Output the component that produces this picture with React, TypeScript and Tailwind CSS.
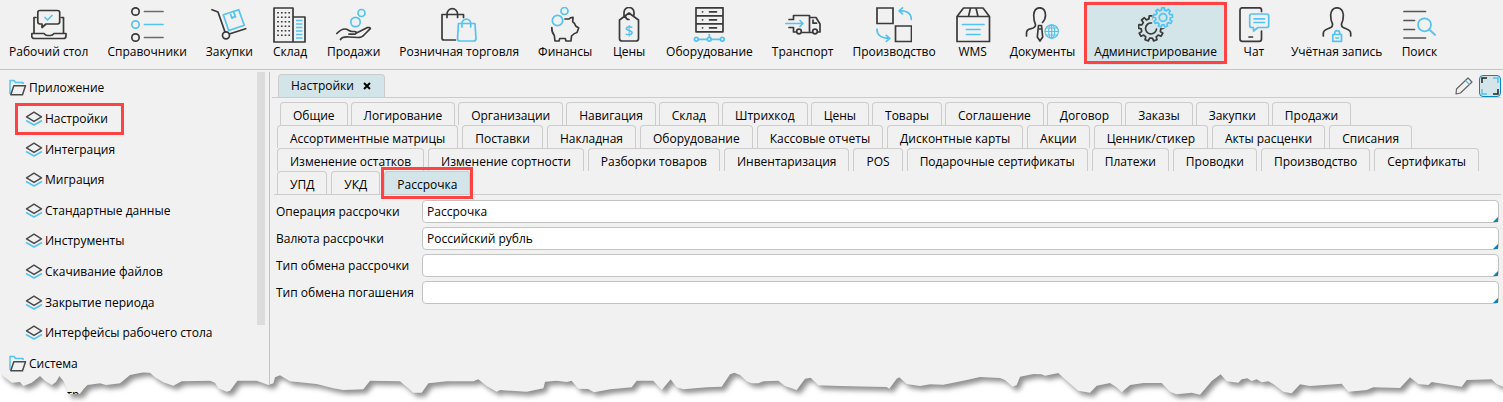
import type { ReactNode } from "react";
import clsx from "clsx";

const DARK = "#3a3a3a";
const BLUE = "#54c3f1";

function gearPath(cx: number, cy: number, outer: number, inner: number, teeth: number) {
  const points: string[] = [];
  const step = (Math.PI * 2) / teeth;
  for (let i = 0; i < teeth; i++) {
    const a = i * step - Math.PI / 2;
    const corners = [
      [-0.3, inner],
      [-0.2, outer],
      [0.2, outer],
      [0.3, inner],
    ];
    for (const [offset, radius] of corners) {
      const t = a + offset * step;
      points.push(`${(cx + radius * Math.cos(t)).toFixed(2)} ${(cy + radius * Math.sin(t)).toFixed(2)}`);
    }
  }
  return `M${points.join("L")}Z`;
}

function Icon({ children }: { children: ReactNode }) {
  return (
    <svg
      viewBox="0 0 36 36"
      className="size-9"
      fill="none"
      stroke={DARK}
      strokeWidth="1.7"
      strokeLinecap="round"
      strokeLinejoin="round"
      aria-hidden="true"
    >
      {children}
    </svg>
  );
}

const icons: Record<string, ReactNode> = {
  desktop: (
    <>
      <path d="M5 10.500H3V26M30.500 10.500h2V26M11 20.500v-3.500H9q-2.200 0-2.200-2.200V5.500Q6.800 3.500 9 3.500h17.500q2.200 0 2.200 2v9.300q0 2.200-2.200 2.200H15z" />
      <path d="M.8 26.500H13q1.500 2 3.500 2h3q2 0 3.500-2h12v2.500q0 2.500-2.500 2.500H3.500Q.8 31.500.8 29z" />
      <path stroke={BLUE} d="m14 10.500 2.500 2.500L21 8.500" />
    </>
  ),
  list: (
    <>
      <circle cx="6.500" cy="4.500" r="3.700" />
      <circle cx="6.500" cy="17.500" r="3.700" stroke={BLUE} />
      <circle cx="6.500" cy="30.500" r="3.700" />
      <path stroke="#6b6b6b" d="M15.500 4.500h18.500M15.500 30.500h18.500" />
      <path stroke={BLUE} d="M15.500 17.500h18.500" />
    </>
  ),
  trolley: (
    <>
      <path d="M1 2.700 7 5l7 20M19 26.700l15.700-5" />
      <circle cx="15" cy="28.300" r="3.500" />
      <path stroke={BLUE} d="m12.300 7.700 15.400-5 5.600 15.600-15.600 5.200zM19 5.700l2 5.500 2-1.500 1.500.3-2-5.500" />
    </>
  ),
  warehouse: (
    <>
      <path d="M2 1h19v34H2zM21 10h12v25H21" />
      <path strokeDasharray="1.500 3" strokeLinecap="butt" d="M6 5v27M9.800 5v27M13.500 5v27M17.200 5v27" />
      <path stroke={BLUE} strokeLinecap="butt" d="M24 13.500h6.500M24 17h6.500M24 20.500h6.500M24 24h6.500M24 27.500h6.500M24 31h6.500" />
    </>
  ),
  sales: (
    <>
      <circle cx="25.500" cy="6" r="3.500" stroke={BLUE} />
      <circle cx="19.500" cy="15" r="4.700" stroke={BLUE} />
      <path d="M.8 26.500Q5 22 9 22c3 0 4 2.500 7 2.500h2.500q2 0 1.500 1.500t-2 1.200H13M20.500 26 31 20.700q3.500-.7 3.300 1L28 28q-2 2.500-6 2.500l-9-.5Q6 29.500 4.500 32.500" />
    </>
  ),
  retail: (
    <>
      <path d="M22.500 10.500v-3H1V31q0 2 2 2h11.500M6 10.500V7a5.300 5.300 0 0 1 10.600 0v3.500" />
      <path stroke={BLUE} d="M17.500 16.500h16.500l1 15q0 2.500-2.500 2.500H19q-2.500 0-2.500-2.500zM21 20v-3.500a4.300 4.300 0 0 1 8.700 0V20" />
    </>
  ),
  finance: (
    <>
      <circle cx="17.500" cy="4" r="3.500" stroke={BLUE} />
      <circle cx="10.500" cy="13.500" r="5.200" stroke={BLUE} />
      <path d="M18 12h4q1.500-1.800 4-1.700l-.3 4.400q2.300 1.500 3 4.300l3 2-1.700 4.500q-2.700.5-5.500 3.500L24 34h-5l-.7-2.500h-5.500L12 34H8l-.7-5.500Q4.500 25 4.800 20.500" />
    </>
  ),
  tag: (
    <>
      <path d="m18 6-9.500 7v18.500Q8.500 34 11 34h14q2.500 0 2.500-2.500V13zM13 9V5.500a5 5 0 0 1 10 0V8M14.500 9.500q.5 3 3.500 3" />
      <text x="18" y="28.500" textAnchor="middle" fill={BLUE} stroke="none" className="font-['Open_Sans'] text-[15px] font-semibold">
        $
      </text>
    </>
  ),
  server: (
    <>
      <path d="M5 .8h27v8H5zM5 8.800h27v8H5zM5 16.800h27v8H5zM11.500 4.800h.1M18.500 4.800h7M11.500 12.800h.1M18.500 12.800h7M11.500 20.800h.1M18.500 20.800h7" />
      <path stroke={BLUE} d="M18.300 27.500v3M7 32.300h9.300M20.300 32.300h9" />
      <circle cx="5.300" cy="32.300" r="1.900" stroke={BLUE} />
      <circle cx="18.300" cy="32.300" r="1.900" stroke={BLUE} />
      <circle cx="31.300" cy="32.300" r="1.900" stroke={BLUE} />
    </>
  ),
  truck: (
    <>
      <path d="M4 12.500h4.500V8.500h16v17M24.500 10.500H31l4 6.500v8h-2M4 20.500h4.500V25H11M17 25.500h10M31.500 16.200h-3.500v-3" />
      <circle cx="14" cy="24.500" r="2.300" />
      <circle cx="30" cy="24.500" r="2.300" />
      <path stroke={BLUE} d="M.8 16.500H18M15 13.500l3 3-3 3" />
    </>
  ),
  production: (
    <>
      <path strokeLinejoin="miter" d="M1 1h16v15.500H1zM19.500 19h16v15.500h-16z" />
      <path stroke={BLUE} d="M35.300 12.500q.5-8.500-12-8.800M26.500.8l-3.500 3 3.500 3M1 22q-.3 9 12.700 9.300M10.300 28.300l3.500 3-3.500 3" />
    </>
  ),
  box: (
    <>
      <path d="M2 9.500h32.500v25H2zL8.500 1h19.500l6.500 8.500M15.500 1l-2 8.500M21 1l2 8.500" />
      <path stroke={BLUE} d="M7.500 17.500h21.500M11.500 22.500h13.500M11.500 27.500h13.500" />
    </>
  ),
  documents: (
    <>
      <path d="M2.500 29v-3q0-3.500 4.500-4.300 4.500-1 4.500-4Q9.700 14 9.700 8 10.300.8 15.700.8T21.500 8q0 4.500-3 7.500M14.500 18.500h3l1.200 11.500-2.700 4-2.700-4zM15 22h2" />
      <g stroke={BLUE} strokeWidth="1.200">
        <circle cx="27.700" cy="24.500" r="6.700" />
        <ellipse cx="27.700" cy="24.500" rx="3" ry="6.700" />
        <path d="M27.700 18v13M21 24.500h13.500M22 21h11.500M22 28h11.500" />
      </g>
    </>
  ),
  gears: (
    <>
      <path d={gearPath(13, 21.5, 12.7, 9.8, 9)} />
      <path d="M18.500 22a5.500 5.500 0 1 1-5-6" />
      <circle cx="25" cy="10.500" r="10.700" fill="#d3e5e8" stroke="none" />
      <path stroke={BLUE} d={gearPath(25, 10.5, 9.7, 7.5, 9)} />
      <circle cx="25" cy="10.500" r="3.800" stroke={BLUE} />
    </>
  ),
  chat: (
    <>
      <path d="M25.500 4.500V3q0-2.200-2.200-2.200H6.200Q4 .8 4 3v29q0 2.300 2.200 2.300h17.100q2.200 0 2.200-2.300v-8M13 30h3.500" />
      <path stroke={BLUE} d="M15.700 7h15q2 0 2 2v9.500q0 2-2 2H22l-4.500 3.500v-3.500h-1.800q-2 0-2-2V9q0-2 2-2zM18 11.800h10.500M18 15.500h10.500" />
    </>
  ),
  account: (
    <>
      <path d="M4.300 29v-2.500q0-3 4-4.500l3.500-1.500q2-1 1.700-3.500Q11.500 13.500 11.700 7.500 12.500.8 18 .8t6.300 6.700q.2 6-1.800 9.500-.3 2.500 1.700 3.500l3.500 1.500q4 1.500 4 4.500V29" />
      <path stroke={BLUE} d="M13.800 27.500h8.700v6.800h-8.700zM15.700 27.500v-1.300a2.500 2.500 0 0 1 5 0v1.300M17 31h2.500" />
    </>
  ),
  search: (
    <>
      <path stroke="#555" d="M3 4.500h21.500M3 13.500h10.500M3 22.500h10.500M3 31h21.500" />
      <circle cx="23.500" cy="17.800" r="6.500" stroke={BLUE} />
      <path stroke={BLUE} d="m28.200 22.500 6 5.500" />
    </>
  ),
};

const toolbar = [
  { label: "Рабочий стол", icon: "desktop" },
  { label: "Справочники", icon: "list" },
  { label: "Закупки", icon: "trolley" },
  { label: "Склад", icon: "warehouse" },
  { label: "Продажи", icon: "sales" },
  { label: "Розничная торговля", icon: "retail" },
  { label: "Финансы", icon: "finance" },
  { label: "Цены", icon: "tag" },
  { label: "Оборудование", icon: "server" },
  { label: "Транспорт", icon: "truck" },
  { label: "Производство", icon: "production" },
  { label: "WMS", icon: "box" },
  { label: "Документы", icon: "documents" },
  { label: "Администрирование", icon: "gears", active: true },
  { label: "Чат", icon: "chat" },
  { label: "Учётная запись", icon: "account" },
  { label: "Поиск", icon: "search" },
];

const tree = [
  { label: "Приложение", folder: true },
  { label: "Настройки", marked: true },
  { label: "Интеграция" },
  { label: "Миграция" },
  { label: "Стандартные данные" },
  { label: "Инструменты" },
  { label: "Скачивание файлов" },
  { label: "Закрытие периода" },
  { label: "Интерфейсы рабочего стола" },
  { label: "Система", folder: true },
  { label: "Настройки" },
];

const tabRows = [
  ["Общие", "Логирование", "Организации", "Навигация", "Склад", "Штрихкод", "Цены", "Товары", "Соглашение", "Договор", "Заказы", "Закупки", "Продажи"],
  ["Ассортиментные матрицы", "Поставки", "Накладная", "Оборудование", "Кассовые отчеты", "Дисконтные карты", "Акции", "Ценник/стикер", "Акты расценки", "Списания"],
  ["Изменение остатков", "Изменение сортности", "Разборки товаров", "Инвентаризация", "POS", "Подарочные сертификаты", "Платежи", "Проводки", "Производство", "Сертификаты"],
  ["УПД", "УКД", "Рассрочка"],
];

const fields = [
  { id: "operation", label: "Операция рассрочки", value: "Рассрочка" },
  { id: "currency", label: "Валюта рассрочки", value: "Российский рубль" },
  { id: "exchange", label: "Тип обмена рассрочки", value: "" },
  { id: "repayment", label: "Тип обмена погашения", value: "" },
];

// torn lower edge of the page, in thirds of a pixel
const TEAR =
  "0,98 12,110 36,128 60,126 70,138 95,128 108,118 120,108 135,122 155,135 168,126 178,108 190,122 200,144 203,162 240,162 250,148 262,135 300,130 318,135 360,130 390,105 430,97 450,98 465,112 490,127 520,137 545,124 630,122 645,128 655,145 680,155 690,152 712,122 770,122 805,135 820,130 825,112 840,106 870,124 950,132 1000,145 1030,150 1090,148 1110,122 1200,124 1225,145 1240,158 1265,158 1285,130 1340,124 1420,124 1435,118 1460,138 1490,155 1500,150 1580,155 1630,145 1635,125 1670,122 1700,126 1715,122 1735,146 1765,147 1782,157 1830,148 1895,142 1910,122 1960,122 1985,150 2012,118 2030,142 2050,148 2120,142 2165,140 2190,103 2203,98 2220,105 2240,124 2255,130 2275,130 2290,124 2335,122 2355,138 2390,150 2415,116 2432,113 2455,136 2520,138 2660,141 2668,146 2690,116 2698,112 2720,132 2760,138 2790,133 2830,134 2900,120 2940,111 3000,114 3015,120 3038,140 3050,135 3060,110 3100,102 3125,103 3135,107 3175,99 3195,118 3235,152 3270,158 3290,137 3330,129 3350,142 3365,157 3390,135 3430,129 3485,129 3510,155 3530,163 3575,158 3600,164 3635,123 3662,103 3680,124 3715,128 3725,118 3742,115 3755,123 3770,118 3785,127 3805,124 3820,132 3850,155 3875,160 3900,133 3930,138 4025,131 4045,155 4100,150 4120,142 4200,144 4230,112 4255,132 4285,135 4295,126 4385,140 4400,120 4475,118 4490,132 4509,140";

function Callout({ className }: { className: string }) {
  return <span className={clsx("pointer-events-none absolute z-10 border-3 border-[#ff4343]", className)} />;
}

function FolderIcon() {
  return (
    <svg viewBox="0 0 18 18" className="size-[18px] shrink-0" fill="none" strokeWidth="1.5" strokeLinejoin="round" aria-hidden="true">
      <path stroke={BLUE} d="M1 15V1.500h4l1.500 2H14V5" />
      <path stroke="#4a4a4a" d="M4.800 6.800H16.500l-3 9H1.800z" />
    </svg>
  );
}

function LayersIcon() {
  return (
    <svg viewBox="0 0 18 16" className="h-4 w-[18px] shrink-0" fill="none" strokeWidth="1.500" strokeLinejoin="round" aria-hidden="true">
      <path stroke={BLUE} d="m1 9.500 8 4.500 8-4.500" />
      <path stroke="#4a4a4a" d="m9 1.200 7.500 4.600L9 10.400 1.500 5.800z" />
    </svg>
  );
}

function TornEdge() {
  return (
    <svg viewBox="0 0 4509 186" preserveAspectRatio="none" className="pointer-events-none absolute inset-x-0 bottom-0 z-20 h-[62px] w-full" aria-hidden="true">
      <defs>
        <clipPath id="torn">
          <polygon points={`${TEAR} 4509,186 0,186`} />
        </clipPath>
        <filter id="soft" x="-5%" y="-20%" width="110%" height="140%">
          <feGaussianBlur stdDeviation="8" />
        </filter>
      </defs>
      <g clipPath="url(#torn)">
        <rect width="4509" height="186" fill="#fff" />
        <polygon points={`0,0 ${TEAR} 4509,0`} transform="translate(11 12)" fill="#909090" filter="url(#soft)" />
      </g>
    </svg>
  );
}

export default function App() {
  return (
    <div className="relative flex h-screen flex-col overflow-hidden bg-[#f1f1f1] font-['Open_Sans','Noto_Sans',sans-serif] text-xs text-black">
      <header className="flex h-[70px] shrink-0 items-start gap-[3px] border-b border-[#c3c3c3] pt-px pl-px">
        {toolbar.map((item) => (
          <button
            key={item.label}
            type="button"
            className={clsx(
              "relative flex h-16 shrink-0 flex-col items-center gap-px rounded-sm px-2 pt-1.5 whitespace-nowrap",
              item.active && "bg-[#d3e5e8]",
            )}
          >
            <Icon>{icons[item.icon]}</Icon>
            {item.label}
            {item.active && <Callout className="-inset-x-0.5 inset-y-px" />}
          </button>
        ))}
      </header>

      <div className="flex min-h-0 grow pt-0.5">
        <nav className="relative w-[270px] shrink-0 border-r border-[#c3c3c3]">
          <ul className="grid h-[338px] auto-rows-fr pt-px">
            {tree.map((item, i) => (
              <li key={i} className={clsx("flex items-center", item.folder ? "pl-[9px]" : "pl-[25px]")}>
                <button type="button" className="relative flex items-center gap-0.5">
                  {item.folder ? <FolderIcon /> : <LayersIcon />}
                  {item.label}
                  {item.marked && <Callout className="-inset-y-2 -right-4 -left-2.5" />}
                </button>
              </li>
            ))}
          </ul>
          <div className="absolute top-0 right-1 h-[253px] w-2 bg-[#dcdcdc]" />
        </nav>

        <main className="min-w-0 grow pt-0.5 pr-0.5 pl-0.5">
          <div className="flex justify-between border-b border-[#cccccc] pl-1.5">
            <div className="flex h-[23px] items-center gap-2 rounded-t-sm border border-b-0 border-[#cccccc] bg-[#d3e5e8] px-3">
              Настройки
              <button type="button" aria-label="Закрыть" className="flex size-2.5 items-center justify-center">
                <svg viewBox="0 0 8 8" className="size-2" stroke="#000" strokeWidth="2" aria-hidden="true">
                  <path d="m1 1 6 6M7 1 1 7" />
                </svg>
              </button>
            </div>
            <div className="flex items-center gap-1.5">
              <button type="button" aria-label="Редактировать">
                <svg viewBox="0 0 18 18" className="size-[18px]" fill="none" stroke="#666" strokeWidth="1.200" strokeLinejoin="round" aria-hidden="true">
                  <path d="m1 17 .5-5L13 1l4 4L5.500 16z" />
                  <path stroke={BLUE} d="m10.500 3.500 4 4" />
                </svg>
              </button>
              <button type="button" aria-label="Развернуть" className="rounded-sm border border-[#0a85b8] bg-[#d3e5e8] p-px">
                <svg viewBox="0 0 18 18" className="size-[18px]" fill="none" strokeWidth="1.500" aria-hidden="true">
                  <path stroke="#222" d="M1 6V1h5M17 12v5h-5" />
                  <path stroke={BLUE} d="M12 1h5v5M6 17H1v-5" />
                </svg>
              </button>
            </div>
          </div>

          <div className="mt-1 ml-0.5 border-b border-[#cccccc]">
            {tabRows.map((row, i) => (
              <div key={i} className={clsx("flex", i === 0 ? "gap-[3px] pl-1.5" : "gap-1 pl-[3px]")}>
                {row.map((tab) => (
                  <button
                    key={tab}
                    type="button"
                    className={clsx(
                      "relative flex h-[23px] shrink-0 items-center rounded-t-sm border border-b-0 border-[#cccccc] px-3 pt-1 whitespace-nowrap",
                      tab === "Рассрочка" && "bg-[#d3e5e8]",
                    )}
                  >
                    {tab}
                    {tab === "Рассрочка" && <Callout className="-inset-x-1 -inset-y-[5px]" />}
                  </button>
                ))}
              </div>
            ))}
          </div>

          <form className="mt-[5px] grid grid-cols-[146px_1fr] gap-y-1 pr-0.5 pl-1">
            {fields.map((field) => (
              <div key={field.id} className="contents">
                <label htmlFor={field.id} className="self-center whitespace-nowrap">
                  {field.label}
                </label>
                <div className="relative">
                  <input
                    id={field.id}
                    type="text"
                    defaultValue={field.value}
                    className="block h-[23px] w-full rounded-sm border border-[#c3c3c3] bg-white px-1"
                  />
                  <span className="absolute right-px bottom-px size-[5px] bg-[#0a85b8] [clip-path:polygon(100%_0,100%_100%,0_100%)]" />
                </div>
              </div>
            ))}
          </form>
        </main>
      </div>
      <TornEdge />
    </div>
  );
}
